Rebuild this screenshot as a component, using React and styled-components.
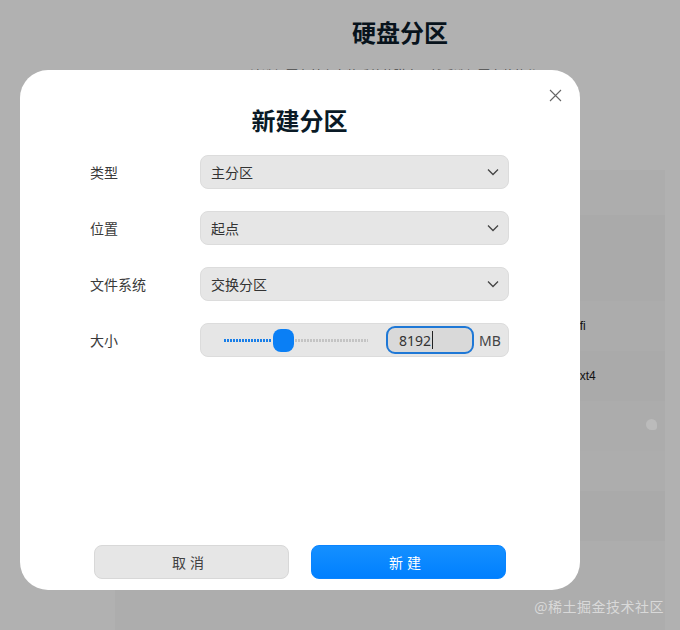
import React from "react";
import styled, { createGlobalStyle } from "styled-components";

const Global = createGlobalStyle`
  html, body { margin: 0; padding: 0; }
  body {
    width: 680px; height: 630px; overflow: hidden;
    background: #b1b1b1;
    font-family: "Noto Sans", "Noto Sans CJK SC", sans-serif;
  }
  #root { position: relative; width: 680px; height: 630px; }
`;

const Page = styled.div`
  position: relative;
  width: 680px;
  height: 630px;
  display: flex;
  flex-direction: column;
`;

const BgHeader = styled.div`
  margin-left: 120px;
  width: 560px;
  display: flex;
  flex-direction: column;
  align-items: center;
  padding-top: 14px;
`;

const BgTitle = styled.h1`
  margin: 0;
  font-size: 24px;
  line-height: 36px;
  font-weight: 700;
  color: #08131c;
  font-family: "Noto Sans CJK SC", sans-serif;
`;

const BgSub = styled.div`
  margin-top: 16px;
  font-size: 12px;
  line-height: 18px;
  color: #4a4a4a;
  font-family: "Noto Sans CJK SC", sans-serif;
`;

const BgPanel = styled.div`
  margin: 86px 0 0 115px;
  width: 550px;
  flex: 1;
  background: #adadad;
  display: flex;
  flex-direction: column;
`;

const BgRow = styled.div`
  height: ${(p) => p.$h}px;
  background: ${(p) => p.$bg || "transparent"};
  display: flex;
  align-items: center;
  padding-left: 458px;
  font-family: "Liberation Sans", sans-serif;
  font-size: 12px;
  color: #111;
  position: relative;
`;

const GhostIcon = styled.div`
  position: absolute;
  left: 531px;
  top: 18px;
  width: 11px;
  height: 11px;
  border-radius: 50% 50% 3px 50%;
  background: #c4c4c4;
  opacity: 0.6;
`;

const Watermark = styled.div`
  position: absolute;
  right: 16px;
  bottom: 14px;
  font-size: 14px;
  color: #d9d9d9;
  font-family: "Noto Sans CJK SC", sans-serif;
  letter-spacing: 0.5px;
`;

const Dialog = styled.div`
  position: absolute;
  left: 20px;
  top: 70px;
  width: 560px;
  height: 520px;
  background: #fff;
  border-radius: 28px;
  display: flex;
  flex-direction: column;
  align-items: center;
  box-sizing: border-box;
  padding: 30px 71px 11px 70px;
`;

const Close = styled.button`
  position: absolute;
  top: 17px;
  right: 17px;
  width: 16px;
  height: 16px;
  padding: 0;
  border: 0;
  background: transparent;
  display: flex;
  align-items: center;
  justify-content: center;
`;

const Title = styled.h2`
  margin: 0;
  font-size: 24px;
  line-height: 40px;
  font-weight: 700;
  color: #0a1a26;
  font-family: "Noto Sans CJK SC", sans-serif;
`;

const Form = styled.div`
  margin-top: 15px;
  width: 100%;
  display: flex;
  flex-direction: column;
  gap: 22px;
`;

const Row = styled.div`
  display: flex;
  align-items: center;
  height: 34px;
`;

const Label = styled.div`
  width: 110px;
  flex: none;
  font-size: 14px;
  color: #3a3a3a;
  font-family: "Noto Sans CJK SC", sans-serif;
`;

const Field = styled.div`
  flex: 1;
  min-width: 0;
  height: 34px;
  box-sizing: border-box;
  background: #e6e6e6;
  border: 1px solid #dcdcdc;
  border-radius: 8px;
  display: flex;
  align-items: center;
  padding: 0 9px 0 10px;
`;

const SelectText = styled.span`
  flex: 1;
  font-size: 14px;
  color: #333;
  font-family: "Noto Sans CJK SC", sans-serif;
`;

const SliderWrap = styled.div`
  width: 144px;
  height: 24px;
  margin-left: 13px;
  display: flex;
  align-items: center;
  flex: none;
`;

const Track = styled.div`
  height: 3px;
  width: ${(p) => p.$w}px;
  background: repeating-linear-gradient(
    to right,
    ${(p) => p.$color} 0 2px,
    transparent 2px 3px
  );
`;

const Handle = styled.div`
  width: 21px;
  height: 23px;
  border-radius: 8px;
  background: #0a7ff5;
  flex: none;
  margin: 0 1px;
`;

const NumBox = styled.div`
  margin-left: 18px;
  width: 88px;
  height: 28px;
  flex: none;
  box-sizing: border-box;
  border: 2px solid #1f78d6;
  border-radius: 9px;
  background: #d9d9d9;
  display: flex;
  align-items: center;
  padding-left: 11px;
  font-size: 14px;
  color: #333;
  font-family: "Noto Sans", sans-serif;
`;

const Caret = styled.span`
  display: inline-block;
  width: 1px;
  height: 18px;
  background: #222;
  margin-left: 1px;
`;

const Unit = styled.span`
  margin-left: 5px;
  font-size: 14px;
  color: #444;
  font-family: "Noto Sans", sans-serif;
`;

const Footer = styled.div`
  margin-top: auto;
  display: flex;
  gap: 22px;
`;

const Btn = styled.button`
  width: 195px;
  height: 34px;
  border-radius: 8px;
  font-size: 14px;
  letter-spacing: 4px;
  padding-left: 4px;
  font-family: "Noto Sans CJK SC", sans-serif;
  border: 1px solid ${(p) => (p.$primary ? "#0a84ff" : "#d8d8d8")};
  background: ${(p) => (p.$primary ? "linear-gradient(#1590ff, #0080ff)" : "#e6e6e6")};
  color: ${(p) => (p.$primary ? "#fff" : "#414141")};
`;

const Chevron = () => (
  <svg width="12" height="8" viewBox="0 0 12 8" fill="none">
    <path d="M1 1.5l5 5 5-5" stroke="#444" strokeWidth="1.3" />
  </svg>
);

function Select({ value }) {
  return (
    <Field>
      <SelectText>{value}</SelectText>
      <Chevron />
    </Field>
  );
}

export default function App() {
  return (
    <Page>
      <Global />
      <BgHeader>
        <BgTitle>硬盘分区</BgTitle>
        <BgSub>请选择要在其上安装系统的磁盘，然后选择要安装的分区</BgSub>
      </BgHeader>
      <BgPanel>
        <BgRow $h={45} />
        <BgRow $h={86} $bg="#aaaaaa" />
        <BgRow $h={50} $bg="#acacac">efi</BgRow>
        <BgRow $h={50} $bg="#aaaaaa">ext4</BgRow>
        <BgRow $h={50} $bg="#acacac">
          <GhostIcon />
        </BgRow>
        <BgRow $h={40} />
        <BgRow $h={50} $bg="#aaaaaa" />
      </BgPanel>
      <Watermark>@稀土掘金技术社区</Watermark>

      <Dialog>
        <Close aria-label="close">
          <svg width="13" height="13" viewBox="0 0 13 13">
            <path d="M1 1l11 11M12 1L1 12" stroke="#666" strokeWidth="1.1" />
          </svg>
        </Close>
        <Title>新建分区</Title>
        <Form>
          <Row>
            <Label>类型</Label>
            <Select value="主分区" />
          </Row>
          <Row>
            <Label>位置</Label>
            <Select value="起点" />
          </Row>
          <Row>
            <Label>文件系统</Label>
            <Select value="交换分区" />
          </Row>
          <Row>
            <Label>大小</Label>
            <Field>
              <SliderWrap>
                <Track $w={48} $color="#1a7fe8" />
                <Handle />
                <Track $w={73} $color="#c4c4c4" />
              </SliderWrap>
              <NumBox>
                8192
                <Caret />
              </NumBox>
              <Unit>MB</Unit>
            </Field>
          </Row>
        </Form>
        <Footer>
          <Btn>取消</Btn>
          <Btn $primary>新建</Btn>
        </Footer>
      </Dialog>
    </Page>
  );
}
